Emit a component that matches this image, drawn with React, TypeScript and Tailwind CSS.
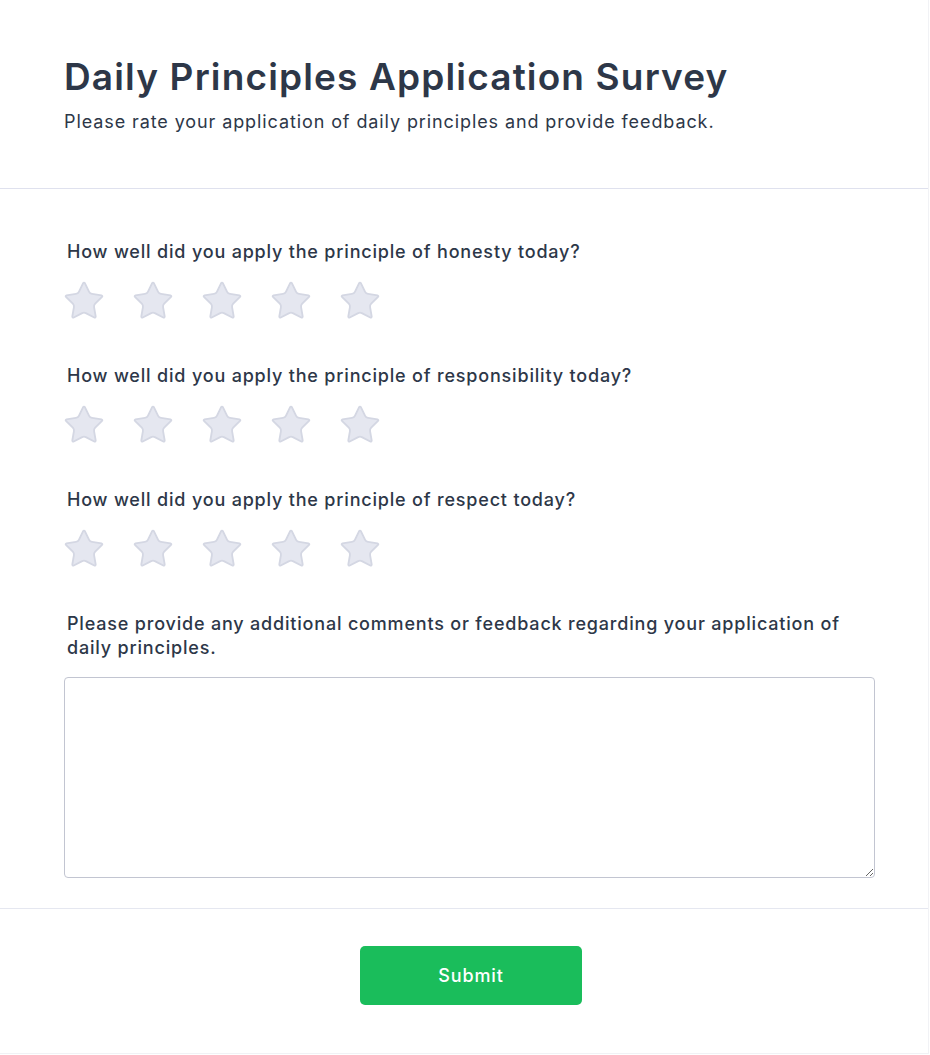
import React, { useState } from 'react';

const questions = [
  'How well did you apply the principle of honesty today?',
  'How well did you apply the principle of responsibility today?',
  'How well did you apply the principle of respect today?',
];

const Star: React.FC<{ active: boolean; onClick: () => void }> = ({ active, onClick }) => (
  <button type="button" onClick={onClick} className="h-11 w-11 shrink-0">
    <svg viewBox="0 0 24 24" width="44" height="44" fill={active ? '#facc15' : '#e5e7f0'} stroke={active ? '#eab308' : '#d4d7e3'} strokeWidth="1" strokeLinejoin="round">
      <path d="M11.525 2.295a.53.53 0 0 1 .95 0l2.31 4.679a2.123 2.123 0 0 0 1.595 1.16l5.166.756a.53.53 0 0 1 .294.904l-3.736 3.638a2.123 2.123 0 0 0-.611 1.878l.882 5.14a.53.53 0 0 1-.771.56l-4.618-2.428a2.122 2.122 0 0 0-1.973 0L6.396 21.01a.53.53 0 0 1-.77-.56l.881-5.139a2.122 2.122 0 0 0-.611-1.879L2.16 9.795a.53.53 0 0 1 .294-.906l5.165-.755a2.122 2.122 0 0 0 1.597-1.16z" />
    </svg>
  </button>
);

export default function App() {
  const [ratings, setRatings] = useState<number[]>([0, 0, 0]);
  const [comment, setComment] = useState('');

  return (
    <div className="min-h-screen bg-white font-['Inter',sans-serif] text-[#2d3748]">
      <div className="w-[929px] border-r border-b border-[#f1f2f5] bg-white">
        <div className="border-b border-[#dfe1ee] pt-[57px] pb-[52px] pl-16 pr-[53px]">
          <h1 className="text-[37px] font-semibold leading-10 tracking-[0.031em]">Daily Principles Application Survey</h1>
          <p className="mt-[11px] text-lg leading-7 tracking-[0.05em]">
            Please rate your application of daily principles and provide feedback.
          </p>
        </div>

        <div className="flex flex-col gap-[41px] pt-[51px] pb-[30px] pl-16 pr-[53px]">
          {questions.map((q, qi) => (
            <div key={q}>
              <p className="ml-[3px] text-lg font-medium leading-6 tracking-[0.045em]">{q}</p>
              <div className="-ml-[2px] mt-[15px] flex gap-[25px]">
                {[1, 2, 3, 4, 5].map((n) => (
                  <Star
                    key={n}
                    active={ratings[qi] >= n}
                    onClick={() => setRatings((r) => r.map((v, i) => (i === qi ? n : v)))}
                  />
                ))}
              </div>
            </div>
          ))}

          <div>
            <p className="ml-[3px] text-lg font-medium leading-6 tracking-[0.045em]">
              Please provide any additional comments or feedback regarding your application of daily principles.
            </p>
            <textarea
              value={comment}
              onChange={(e) => setComment(e.target.value)}
              className="mt-[17px] block h-[201px] w-full rounded border border-[#c2c5d1] p-3 text-base outline-none"
            />
          </div>
        </div>

        <div className="flex justify-center border-t border-[#e5e7f0] pt-[37px] pb-[48px] pl-[72px] pr-[58px]">
          <button type="button" className="h-[59px] w-[222px] rounded-[5px] bg-[#1abd5b] text-lg font-medium tracking-[0.05em] text-white">
            Submit
          </button>
        </div>
      </div>
    </div>
  );
}
